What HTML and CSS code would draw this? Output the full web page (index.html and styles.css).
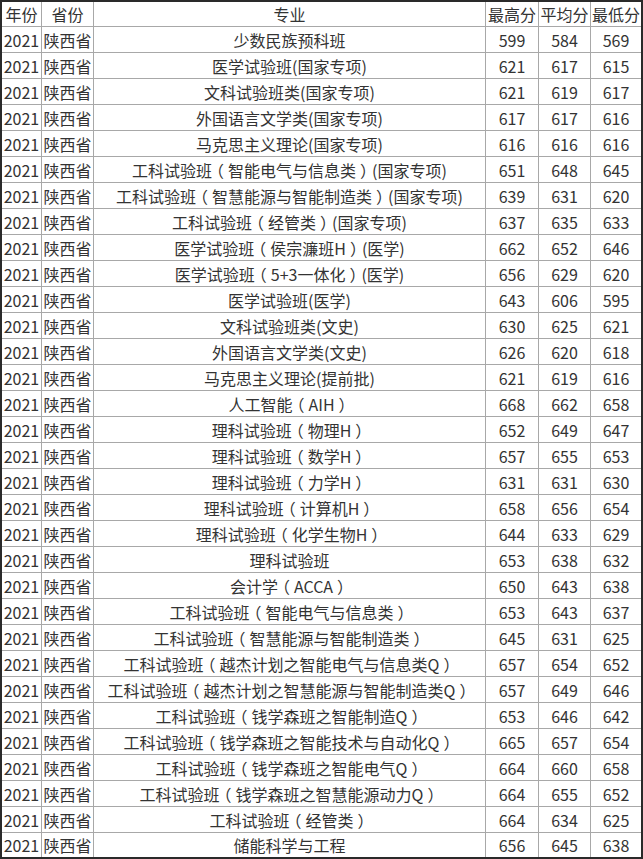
FILE: index.html
```html
<!DOCTYPE html>
<html lang="zh">
<head>
<meta charset="utf-8">
<link rel="stylesheet" href="styles.css">
</head>
<body>
<table class="scores">
<thead>
<tr><th class="c-year">年份</th><th class="c-prov">省份</th><th class="c-major">专业</th><th class="c-max">最高分</th><th class="c-avg">平均分</th><th class="c-min">最低分</th></tr>
</thead>
<tbody>
<tr><td>2021</td><td>陕西省</td><td>少数民族预科班</td><td>599</td><td>584</td><td>569</td></tr>
<tr><td>2021</td><td>陕西省</td><td>医学试验班(国家专项)</td><td>621</td><td>617</td><td>615</td></tr>
<tr><td>2021</td><td>陕西省</td><td>文科试验班类(国家专项)</td><td>621</td><td>619</td><td>617</td></tr>
<tr><td>2021</td><td>陕西省</td><td>外国语言文学类(国家专项)</td><td>617</td><td>617</td><td>616</td></tr>
<tr><td>2021</td><td>陕西省</td><td>马克思主义理论(国家专项)</td><td>616</td><td>616</td><td>616</td></tr>
<tr><td>2021</td><td>陕西省</td><td>工科试验班<span class="fp">（</span>智能电气与信息类<span class="fp">）</span>(国家专项)</td><td>651</td><td>648</td><td>645</td></tr>
<tr><td>2021</td><td>陕西省</td><td>工科试验班<span class="fp">（</span>智慧能源与智能制造类<span class="fp">）</span>(国家专项)</td><td>639</td><td>631</td><td>620</td></tr>
<tr><td>2021</td><td>陕西省</td><td>工科试验班<span class="fp">（</span>经管类<span class="fp">）</span>(国家专项)</td><td>637</td><td>635</td><td>633</td></tr>
<tr><td>2021</td><td>陕西省</td><td>医学试验班<span class="fp">（</span>侯宗濂班H<span class="fp">）</span>(医学)</td><td>662</td><td>652</td><td>646</td></tr>
<tr><td>2021</td><td>陕西省</td><td>医学试验班<span class="fp">（</span>5+3一体化<span class="fp">）</span>(医学)</td><td>656</td><td>629</td><td>620</td></tr>
<tr><td>2021</td><td>陕西省</td><td>医学试验班(医学)</td><td>643</td><td>606</td><td>595</td></tr>
<tr><td>2021</td><td>陕西省</td><td>文科试验班类(文史)</td><td>630</td><td>625</td><td>621</td></tr>
<tr><td>2021</td><td>陕西省</td><td>外国语言文学类(文史)</td><td>626</td><td>620</td><td>618</td></tr>
<tr><td>2021</td><td>陕西省</td><td>马克思主义理论(提前批)</td><td>621</td><td>619</td><td>616</td></tr>
<tr><td>2021</td><td>陕西省</td><td>人工智能<span class="fp">（</span>AIH<span class="fp">）</span></td><td>668</td><td>662</td><td>658</td></tr>
<tr><td>2021</td><td>陕西省</td><td>理科试验班<span class="fp">（</span>物理H<span class="fp">）</span></td><td>652</td><td>649</td><td>647</td></tr>
<tr><td>2021</td><td>陕西省</td><td>理科试验班<span class="fp">（</span>数学H<span class="fp">）</span></td><td>657</td><td>655</td><td>653</td></tr>
<tr><td>2021</td><td>陕西省</td><td>理科试验班<span class="fp">（</span>力学H<span class="fp">）</span></td><td>631</td><td>631</td><td>630</td></tr>
<tr><td>2021</td><td>陕西省</td><td>理科试验班<span class="fp">（</span>计算机H<span class="fp">）</span></td><td>658</td><td>656</td><td>654</td></tr>
<tr><td>2021</td><td>陕西省</td><td>理科试验班<span class="fp">（</span>化学生物H<span class="fp">）</span></td><td>644</td><td>633</td><td>629</td></tr>
<tr><td>2021</td><td>陕西省</td><td>理科试验班</td><td>653</td><td>638</td><td>632</td></tr>
<tr><td>2021</td><td>陕西省</td><td>会计学<span class="fp">（</span>ACCA<span class="fp">）</span></td><td>650</td><td>643</td><td>638</td></tr>
<tr><td>2021</td><td>陕西省</td><td>工科试验班<span class="fp">（</span>智能电气与信息类<span class="fp">）</span></td><td>653</td><td>643</td><td>637</td></tr>
<tr><td>2021</td><td>陕西省</td><td>工科试验班<span class="fp">（</span>智慧能源与智能制造类<span class="fp">）</span></td><td>645</td><td>631</td><td>625</td></tr>
<tr><td>2021</td><td>陕西省</td><td>工科试验班<span class="fp">（</span>越杰计划之智能电气与信息类Q<span class="fp">）</span></td><td>657</td><td>654</td><td>652</td></tr>
<tr><td>2021</td><td>陕西省</td><td>工科试验班<span class="fp">（</span>越杰计划之智慧能源与智能制造类Q<span class="fp">）</span></td><td>657</td><td>649</td><td>646</td></tr>
<tr><td>2021</td><td>陕西省</td><td>工科试验班<span class="fp">（</span>钱学森班之智能制造Q<span class="fp">）</span></td><td>653</td><td>646</td><td>642</td></tr>
<tr><td>2021</td><td>陕西省</td><td>工科试验班<span class="fp">（</span>钱学森班之智能技术与自动化Q<span class="fp">）</span></td><td>665</td><td>657</td><td>654</td></tr>
<tr><td>2021</td><td>陕西省</td><td>工科试验班<span class="fp">（</span>钱学森班之智能电气Q<span class="fp">）</span></td><td>664</td><td>660</td><td>658</td></tr>
<tr><td>2021</td><td>陕西省</td><td>工科试验班<span class="fp">（</span>钱学森班之智慧能源动力Q<span class="fp">）</span></td><td>664</td><td>655</td><td>652</td></tr>
<tr><td>2021</td><td>陕西省</td><td>工科试验班<span class="fp">（</span>经管类<span class="fp">）</span></td><td>664</td><td>634</td><td>625</td></tr>
<tr><td>2021</td><td>陕西省</td><td>储能科学与工程</td><td>656</td><td>645</td><td>638</td></tr>
</tbody>
</table>
</body>
</html>
```

FILE: styles.css
```css
html, body {
  margin: 0;
  padding: 0;
  background: #fff;
}
.scores {
  border-collapse: separate;
  border-spacing: 0;
  table-layout: fixed;
  width: 643px;
  border: 2px solid #2a2a2a;
  font-family: "Noto Sans CJK SC", "Open Sans", sans-serif;
  font-size: 16px;
  color: #333;
}
.scores th,
.scores td {
  box-sizing: border-box;
  border: 0;
  border-right: 1px solid #a8a8a8;
  border-bottom: 1px solid #a8a8a8;
  height: 26px;
  padding: 0;
  text-align: center;
  vertical-align: middle;
  font-weight: normal;
  line-height: 24px;
  white-space: nowrap;
  overflow: hidden;
}
.scores th {
  height: 25px;
}
.scores th:last-child,
.scores td:last-child {
  border-right: 0;
}
.scores tbody tr:last-child td {
  border-bottom: 0;
  height: 24px;
}
.c-year { width: 40px; }
.c-prov { width: 52px; }
.c-major { width: 392px; }
.c-max { width: 53px; }
.c-avg { width: 52px; }
.c-min { width: 50px; }
.fp {
  display: inline-block;
  width: 1em;
  text-align: center;
  font-feature-settings: "halt" 1;
}
```
